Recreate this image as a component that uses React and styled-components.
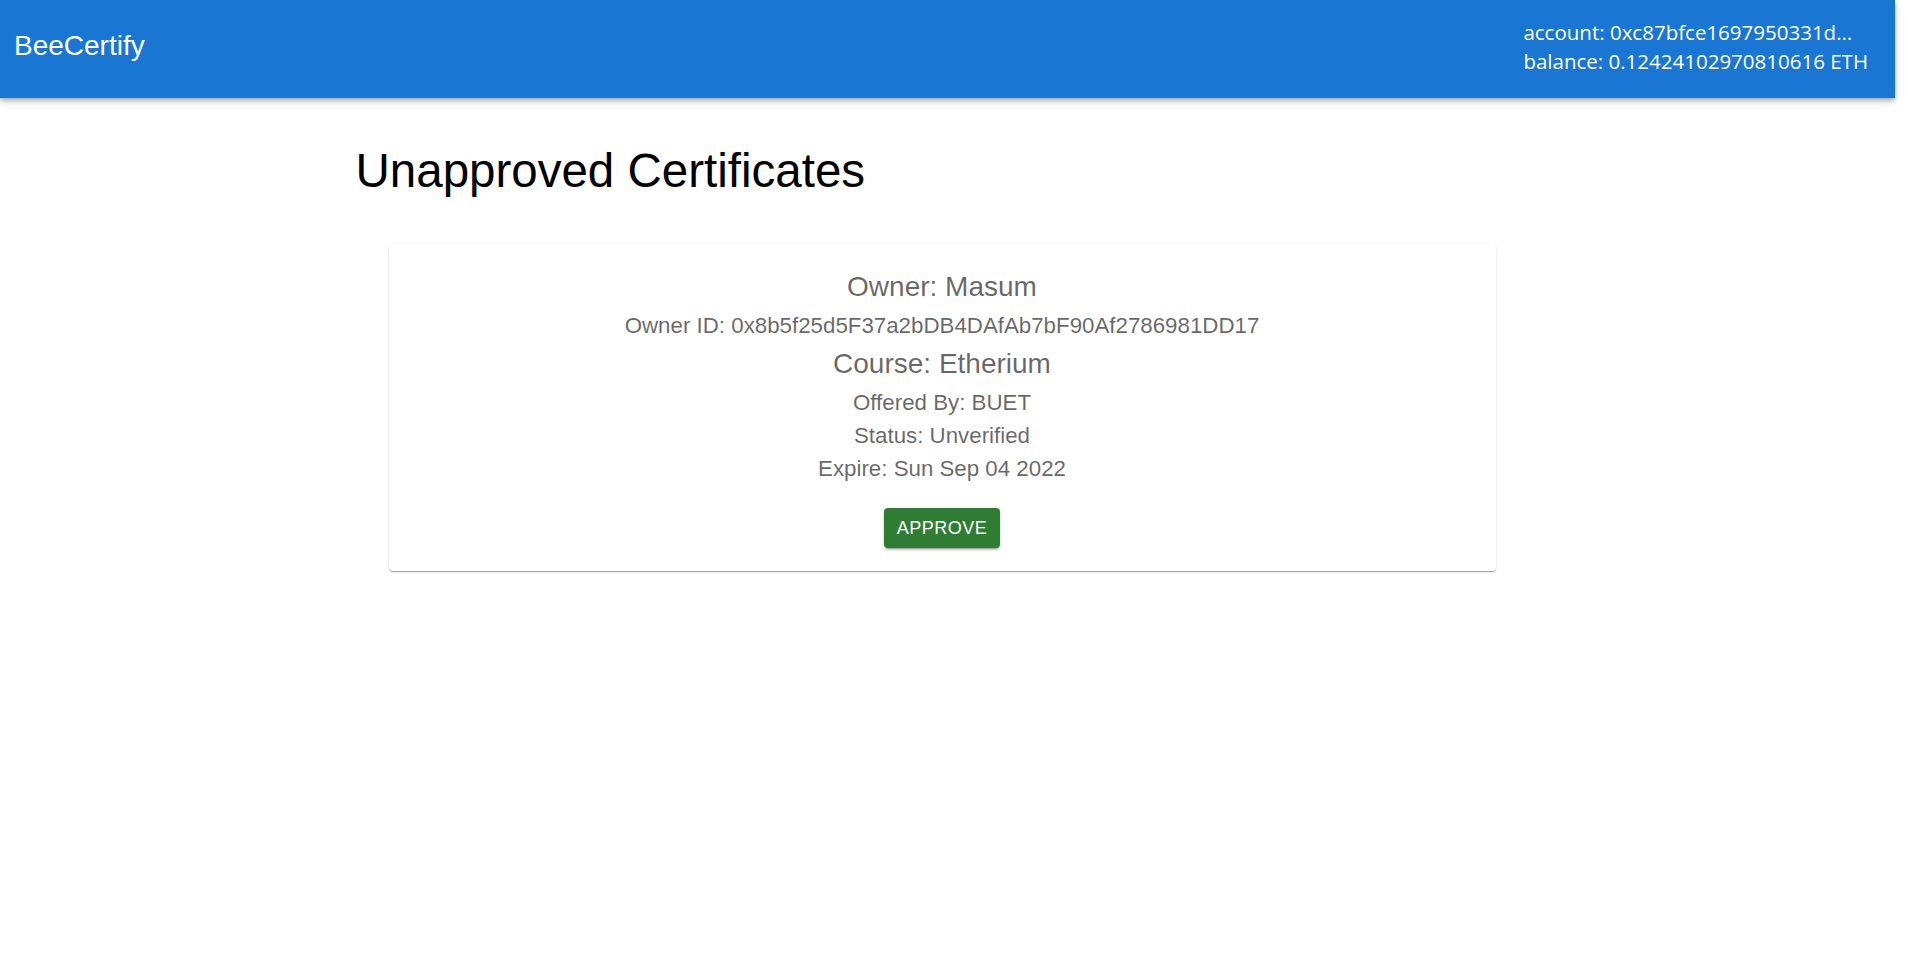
import React from 'react';
import styled, { createGlobalStyle } from 'styled-components';

const GlobalStyle = createGlobalStyle`
  html, body {
    margin: 0;
    padding: 0;
    background: #fff;
  }
  body {
    font-family: 'Liberation Sans', Arial, sans-serif;
  }
`;

const Page = styled.div`
  margin-right: 13px;
  min-height: 960px;
`;

const AppBar = styled.header`
  display: flex;
  justify-content: space-between;
  align-items: flex-start;
  height: 98px;
  box-sizing: border-box;
  padding: 0 27px 0 14px;
  background: #1976d2;
  color: #fff;
  box-shadow: 0 2px 4px -1px rgba(0, 0, 0, 0.2), 0 4px 5px 0 rgba(0, 0, 0, 0.14),
    0 1px 10px 0 rgba(0, 0, 0, 0.12);
`;

const Brand = styled.div`
  margin-top: 30px;
  font-size: 28px;
  line-height: 32px;
`;

const Wallet = styled.div`
  margin-top: 18px;
  font-family: 'Open Sans', 'Noto Sans', sans-serif;
  font-size: 20.5px;
  line-height: 29px;
  white-space: nowrap;
`;

const Main = styled.main`
  max-width: 1184px;
  margin: 0 auto;
  padding-top: 45px;
`;

const Title = styled.h1`
  margin: 0 0 45px;
  font-size: 47.5px;
  font-weight: 400;
  line-height: 56px;
  color: #000;
`;

const Card = styled.section`
  display: flex;
  flex-direction: column;
  align-items: center;
  margin: 0 44px 0 33px;
  padding: 21px 16px 23px;
  border-radius: 4px;
  background: #fff;
  box-shadow: 0 2px 1px -1px rgba(0, 0, 0, 0.2), 0 1px 1px 0 rgba(0, 0, 0, 0.14),
    0 1px 3px 0 rgba(0, 0, 0, 0.12);
`;

const Line = styled.div`
  color: rgba(0, 0, 0, 0.6);
  font-size: ${(p) => (p.$big ? '28px' : '22.3px')};
  line-height: ${(p) => (p.$big ? '44px' : '33px')};
  text-align: center;
`;

const ApproveButton = styled.button`
  margin-top: 23px;
  height: 40px;
  padding: 0 13px;
  border: 0;
  border-radius: 4px;
  background: #2e7d32;
  color: #fff;
  font-family: 'Liberation Sans', Arial, sans-serif;
  font-size: 18px;
  letter-spacing: 0.5px;
  text-transform: uppercase;
  cursor: pointer;
  box-shadow: 0 3px 1px -2px rgba(0, 0, 0, 0.2), 0 2px 2px 0 rgba(0, 0, 0, 0.14),
    0 1px 5px 0 rgba(0, 0, 0, 0.12);
`;

const certificate = {
  owner: 'Masum',
  ownerId: '0x8b5f25d5F37a2bDB4DAfAb7bF90Af2786981DD17',
  course: 'Etherium',
  offeredBy: 'BUET',
  status: 'Unverified',
  expire: 'Sun Sep 04 2022',
};

export default function App() {
  return (
    <Page>
      <GlobalStyle />
      <AppBar>
        <Brand>BeeCertify</Brand>
        <Wallet>
          <div>account: 0xc87bfce1697950331d…</div>
          <div>balance: 0.12424102970810616 ETH</div>
        </Wallet>
      </AppBar>
      <Main>
        <Title>Unapproved Certificates</Title>
        <Card>
          <Line $big>Owner: {certificate.owner}</Line>
          <Line>Owner ID: {certificate.ownerId}</Line>
          <Line $big>Course: {certificate.course}</Line>
          <Line>Offered By: {certificate.offeredBy}</Line>
          <Line>Status: {certificate.status}</Line>
          <Line>Expire: {certificate.expire}</Line>
          <ApproveButton>Approve</ApproveButton>
        </Card>
      </Main>
    </Page>
  );
}
